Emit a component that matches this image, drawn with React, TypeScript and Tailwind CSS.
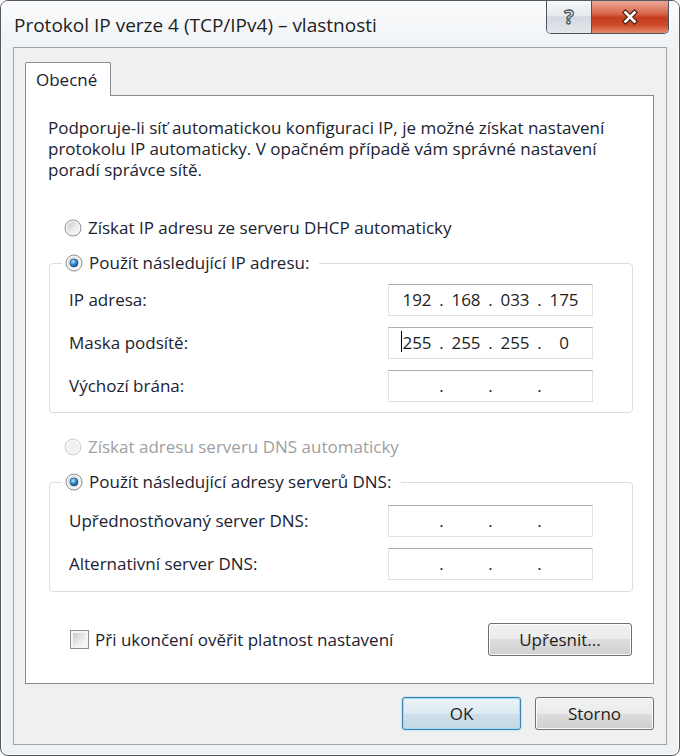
import React from 'react'
import clsx from 'clsx'

function Radio({ checked, disabled }: { checked?: boolean; disabled?: boolean }) {
  return (
    <svg width="18" height="18" viewBox="0 0 18 18" className="shrink-0">
      <defs>
        <linearGradient id="radioFill" x1="0" y1="0" x2="1" y2="1">
          <stop offset="0" stopColor="#c9c9c9" />
          <stop offset="0.6" stopColor="#ececec" />
          <stop offset="1" stopColor="#fefefe" />
        </linearGradient>
        <radialGradient id="radioDot" cx="0.38" cy="0.32" r="0.75">
          <stop offset="0" stopColor="#b5ecff" />
          <stop offset="0.45" stopColor="#3a97d6" />
          <stop offset="1" stopColor="#0d3b6e" />
        </radialGradient>
      </defs>
      <circle
        cx="9"
        cy="9"
        r="8"
        fill={disabled ? '#f5f5f5' : '#f4f4f4'}
        stroke={disabled ? '#cfcfcf' : '#8e8f8f'}
      />
      <circle cx="9" cy="9" r="6" fill={disabled ? '#f0f0f0' : 'url(#radioFill)'} />
      {checked && <circle cx="9" cy="9" r="4" fill="url(#radioDot)" stroke="#1c4f80" strokeWidth="0.6" />}
    </svg>
  )
}

function IpField({ octets, caret }: { octets?: string[]; caret?: boolean }) {
  const values = octets ?? ['', '', '', '']
  return (
    <div className="w-[205px] h-[32px] bg-white border border-[#dfe3e9] border-t-[#abadb3] flex items-center pl-[10px] text-[17px] text-[#1e1e1e]">
      {values.map((v, i) => (
        <React.Fragment key={i}>
          {i > 0 && <span className="w-[13px] text-center">.</span>}
          <span className="w-[36px] text-center">
            <span className="relative inline-block">
              {caret && i === 0 && (
                <span className="absolute left-[-1px] top-[1px] w-px h-[21px] bg-black" />
              )}
              {v}
            </span>
          </span>
        </React.Fragment>
      ))}
    </div>
  )
}

function Button({ children, primary, className }: { children: React.ReactNode; primary?: boolean; className?: string }) {
  return (
    <div
      className={clsx(
        'h-[33px] rounded-[3px] border flex items-center justify-center text-[17px] text-[#1e1e1e]',
        primary
          ? 'border-[#3c7fb1] bg-[linear-gradient(#eaf3f9,#dde9f1_50%,#cfdfea_50%,#c4d8e6)] shadow-[inset_0_0_0_1px_#9cdcf7,0_0_2px_#7ccdf4]'
          : 'border-[#707070] bg-[linear-gradient(#f2f2f2,#ebebeb_50%,#dddddd_50%,#cfcfcf)] shadow-[inset_0_0_0_1px_#fcfcfc]',
        className
      )}
    >
      {children}
    </div>
  )
}

function Row({ label, octets, caret }: { label: string; octets?: string[]; caret?: boolean }) {
  return (
    <div className="h-[32px] flex items-center justify-between">
      <span>{label}</span>
      <IpField octets={octets} caret={caret} />
    </div>
  )
}

export default function App() {
  return (
    <div className="w-[680px] h-[756px] bg-white font-['Open_Sans','Noto_Sans',sans-serif] text-[#1b2230]">
      <div className="h-full border border-[#555a60] rounded-[8px] bg-[#eff2f5] shadow-[inset_0_0_0_1px_#fbfcfd] flex flex-col overflow-hidden">
        {/* title bar */}
        <div className="h-[46px] shrink-0 flex justify-between pl-[13px] pr-[10px] bg-[linear-gradient(#fbfcfd,#eff2f5)]">
          <div className="pt-[11px] text-[19px] leading-[26px] text-[#1e1e1e]">
            Protokol IP verze 4 (TCP/IPv4) – vlastnosti
          </div>
          <div className="flex h-[33px] border border-t-0 border-[#4b5562] rounded-b-[5px] overflow-hidden">
            <div className="w-[45px] flex items-center justify-center border-r border-[#4b5562] bg-[linear-gradient(#f6f8fa,#e6eaee_45%,#d3d9df_50%,#e2e7eb)]">
              <span className="text-[20px] font-bold leading-none text-[#f3f5f7] [-webkit-text-stroke:1.3px_#4a5563]">?</span>
            </div>
            <div className="w-[76px] flex items-center justify-center bg-[linear-gradient(#eaa897,#d9664c_40%,#c43c1f_52%,#cd4a2a_75%,#e48a6c)]">
              <svg width="18" height="16" viewBox="0 0 18 16">
                <path d="M4.5 3.5 L13.5 12.5 M13.5 3.5 L4.5 12.5" stroke="#4a2418" strokeWidth="5" strokeLinecap="square" />
                <path d="M4.5 3.5 L13.5 12.5 M13.5 3.5 L4.5 12.5" stroke="#ffffff" strokeWidth="2.6" strokeLinecap="square" />
              </svg>
            </div>
          </div>
        </div>

        {/* client area */}
        <div className="flex-1 mx-[12px] mb-[10px] border border-[#9da3a9] bg-[#f0f0f0] flex flex-col pl-[11px] pr-[12px] pt-[14px] pb-[14px]">
          <div className="flex">
            <div className="relative z-10 -mb-px h-[34px] w-[86px] border border-b-0 border-[#898c95] bg-white rounded-t-[2px] pl-[10px] flex items-center text-[17px]">
              Obecné
            </div>
          </div>

          <div className="flex-1 border border-[#898c95] bg-white pl-[22px] pr-[20px] pt-[21px] flex flex-col text-[17px]">
            <p className="leading-[21px]">
              Podporuje-li síť automatickou konfiguraci IP, je možné získat nastavení
              <br />
              protokolu IP automaticky. V opačném případě vám správné nastavení
              <br />
              poradí správce sítě.
            </p>

            <div className="mt-[38px] ml-[16px] h-[20px] flex items-center gap-[6px]">
              <Radio />
              <span>Získat IP adresu ze serveru DHCP automaticky</span>
            </div>

            <fieldset className="mt-[14px] ml-[1px] border border-[#d5dfe5] rounded-[4px] pl-[19px] pr-[39px] pt-[10px] pb-[10px]">
              <legend className="-ml-[7px] pl-[3px] pr-[10px] h-[22px] flex items-center gap-[6px]">
                <Radio checked />
                <span>Použít následující IP adresu:</span>
              </legend>
              <div className="flex flex-col gap-[11px]">
                <Row label="IP adresa:" octets={['192', '168', '033', '175']} />
                <Row label="Maska podsítě:" octets={['255', '255', '255', '0']} caret />
                <Row label="Výchozí brána:" />
              </div>
            </fieldset>

            <div className="mt-[24px] ml-[16px] h-[20px] flex items-center gap-[6px] text-[#a0a0a0]">
              <Radio disabled />
              <span>Získat adresu serveru DNS automaticky</span>
            </div>

            <fieldset className="mt-[14px] ml-[1px] border border-[#d5dfe5] rounded-[4px] pl-[19px] pr-[39px] pt-[12px] pb-[11px]">
              <legend className="-ml-[7px] pl-[3px] pr-[10px] h-[22px] flex items-center gap-[6px]">
                <Radio checked />
                <span>Použít následující adresy serverů DNS:</span>
              </legend>
              <div className="flex flex-col gap-[11px]">
                <Row label="Upřednostňovaný server DNS:" />
                <Row label="Alternativní server DNS:" />
              </div>
            </fieldset>

            <div className="mt-[31px] h-[33px] flex items-center justify-between">
              <div className="ml-[22px] flex items-center gap-[6px]">
                <div className="w-[19px] h-[19px] border border-[#8f8f8f] bg-[#f4f4f4] p-[2px]">
                  <div className="w-full h-full bg-[linear-gradient(135deg,#cbcbcb,#ececec_60%,#fbfbfb)]" />
                </div>
                <span>Při ukončení ověřit platnost nastavení</span>
              </div>
              <Button className="w-[144px] mr-[1px]">Upřesnit...</Button>
            </div>
          </div>

          <div className="mt-[13px] flex justify-end gap-[14px]">
            <Button primary className="w-[119px]">OK</Button>
            <Button className="w-[119px]">Storno</Button>
          </div>
        </div>
      </div>
    </div>
  )
}
